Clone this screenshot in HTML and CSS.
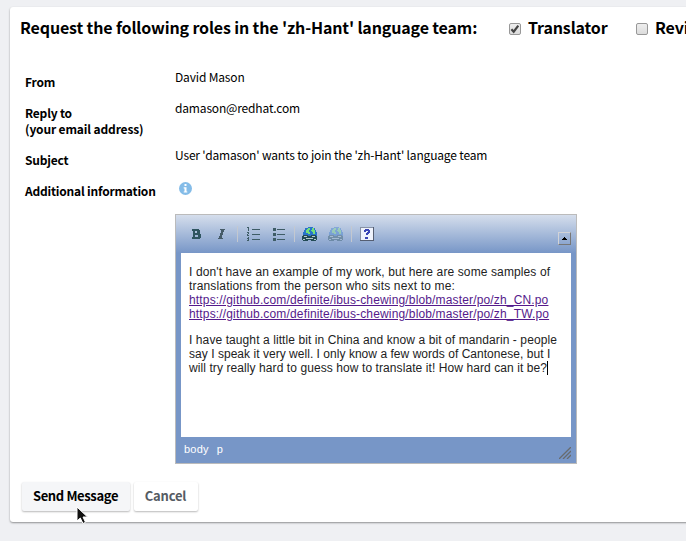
FILE: index.html
```
<!DOCTYPE html>
<html lang="en">
<head>
<meta charset="utf-8">
<title>Request to join language team</title>
<link rel="stylesheet" href="styles.css">
</head>
<body>
<main class="panel">
  <header class="roles">
    <h1 class="title">Request the following roles in the 'zh-Hant' language team:</h1>
    <span class="box"><svg width="12" height="12" viewBox="0 0 12 12"><path d="M2.4 6.2 4.7 8.7 9.3 2.7" fill="none" stroke="#444" stroke-width="2.2"/></svg></span>
    <span class="role first">Translator</span>
    <span class="box"></span>
    <span class="role">Revi</span>
  </header>
  <div class="row from"><div class="label">From</div><div class="value">David Mason</div></div>
  <div class="row reply"><div class="label">Reply to<br><span class="hint">(your email address)</span></div><div class="value mail">damason@redhat.com</div></div>
  <div class="row subject"><div class="label">Subject</div><div class="value">User 'damason' wants to join the 'zh-Hant' language team</div></div>
  <div class="row info"><div class="label">Additional information</div>
    <svg class="info-icon" width="13" height="13" viewBox="0 0 13 13"><circle cx="6.5" cy="6.5" r="6.5" fill="#84bce8"/><path d="M5.5 2h2v2h-2zM4.7 5.2h2.8v4.2h.8v1.2H4.7V9.400h.8V6.400h-.8z" fill="#fff"/></svg>
  </div>
  <section class="editor">
    <div class="toolbar">
      <svg width="350" height="24" viewBox="0 0 350 24" shape-rendering="crispEdges">
        <path d="M11 7h7v1h1v4h1v4h-1v1h-8v-2h1V9h-1zM14 9v2h2V9zM14 13v2h3v-2z" fill="#2f5560" fill-rule="evenodd"/>
        <g transform="translate(-1 0)">
        <path d="M40 7h5v1h-1v2h-1v3h-1v3h1v1h-5v-1h1v-2h1v-3h1V8h-1z" fill="#465b68"/>
        <path d="M57.500 4v16M114.500 4v16M171.500 4v16" stroke="#c3c8d0" fill="none"/>
        <g fill="#3e5c66"><path d="M72 7h8v1h-8zM72 12h8v1h-8zM72 17h8v1h-8zM97 7h8v1h-8zM97 12h8v1h-8zM97 17h8v1h-8zM93 6h3v3h-3zM93 11h3v3h-3zM93 16h3v3h-3z"/><path d="M67 5h2v4h-1V6h-1zM67 10h2v2h-1v1h1v1h-2v-2h1v-1h-1zM67 15h2v4h-2v-1h1v-1h-1v-1h1z"/></g>
        <g id="link" transform="translate(1 0)"><path d="M127 5h5v1h2v2h1v2h1v4h-14v-4h1V8h1V6h3z" fill="#2873ca"/><path d="M127 6h2v2h-1v2h1v2h-2v-1h-2V8h1V7h1zM131 6h2v2h1v4h-2v-2h-1V9h-1V8h1z" fill="#73df78"/><path d="M122 13h5v1h3v-1h5v1h1v4h-1v1h-5v-1h-3v1h-5v-1h-1v-4h1z" fill="#224a55"/><path d="M123 14h3v1h-3zM131 14h3v1h-3zM125 16h7v1h-7zM122 17h2v1h-2zM133 17h2v1h-2z" fill="#b4c9cc"/></g>
        <use href="#link" x="26" opacity=".35"/>
        <path d="M180 5h14v14h-14z" fill="#555e72"/><path d="M180 5h13v13h-13z" fill="#8791a5"/><path d="M181 6h12v12h-12z" fill="#eef2fc"/>
        <path d="M185 7h4v1h1v3h-1v1h-1v1h-2v-2h1v-1h1V9h-2v1h-2V8h1zM185 15h3v2h-3z" fill="#3945b5"/>
        </g>
      </svg>
      <span class="collapse"><svg width="5" height="3" viewBox="0 0 5 3" shape-rendering="crispEdges"><path d="M2 0h1v1h1v1h1v1H0V2h1V1h1z"/></svg></span>
    </div>
    <div class="content">
      <p><span class="l1">I don't have an example of my work, but here are some samples of</span><br><span class="l2">translations from the person who sits next to me:</span><br><a class="l3">https://github.com/definite/ibus-chewing/blob/master/po/zh_CN.po</a><br><a class="l3">https://github.com/definite/ibus-chewing/blob/master/po/zh_TW.po</a></p>
      <p><span class="l5">I have taught a little bit in China and know a bit of mandarin - people</span><br><span class="l6">say I speak it very well. I only know a few words of Cantonese, but I</span><br><span class="l7">will try really hard to guess how to translate it! How hard can it be?</span><i class="caret"></i></p>
    </div>
    <div class="status"><span>body</span><span>p</span>
      <svg class="grip" width="12" height="12" viewBox="0 0 12 12"><path d="M0 12 12 0M4 12l8-8M8 12l4-4" stroke="#686b6e" stroke-width="1.300"/></svg>
    </div>
  </section>
  <div class="actions"><span class="button send">Send Message</span><span class="button cancel">Cancel</span></div>
</main>
<svg class="pointer" width="14" height="20" viewBox="0 0 14 20"><path d="M1 1v14l3.300-3 2.700 5.500 2.500-1.200L7 11h4.500z" fill="#111" stroke="#fff"/></svg>
</body>
</html>
```
FILE: styles.css
```
* { box-sizing: border-box; }
body { margin: 0; height: 541px; overflow: hidden; background: #eff0f3; color: #000; font: 12px/16px "Noto Sans CJK SC", sans-serif; }
.panel { height: 515px; margin: 7px -10px 0 10px; background: #fff; border-radius: 3px; box-shadow: 0 1px 2px rgba(0,0,0,.4); overflow: hidden; }
.roles { display: flex; height: 59px; padding: 8px 0 0 10px; white-space: nowrap; font-size: 16px; line-height: 24px; font-weight: 700; letter-spacing: -.14px; }
.title { margin: 0; width: 489px; font: inherit; }
.box { width: 12px; height: 12px; margin: 8px 7px 0 0; border: 1px solid #989898; border-radius: 2px; background: linear-gradient(#eee, #dcdcdc); flex: none; }
.box svg { display: block; margin: -1px; }
.role.first { width: 108px; }
.row { display: flex; padding-left: 15px; white-space: nowrap; height: 31px; letter-spacing: -.17px; }
.row.reply { height: 47px; }
.row.info { height: 40px; }
.label { width: 150px; flex: none; font-weight: 700; padding-top: 8px; letter-spacing: -.2px; }
.hint { letter-spacing: -.14px; }
.value { padding-top: 3px; }
.info-icon { margin: 7px 0 0 4px; }
.editor { width: 402px; height: 250px; margin: -1px 0 0 165px; border: 1px solid #bbb; background: #7796c7; padding: 0 5px; font-family: "Liberation Sans", Arial, sans-serif; }
.toolbar { display: flex; justify-content: space-between; height: 38px; margin: 0 -5px; padding: 7px 5px 0; background: linear-gradient(#d5deec, #7796c7); }
.toolbar > svg { flex: none; }
.collapse { width: 13px; height: 13px; margin-top: 10px; border: 1px solid; border-color: #d2d3d7 #777 #777 #d2d3d7; display: flex; align-items: center; justify-content: center; }
.content { height: 184px; background: #fff; padding: 12px 8px; color: #222; font-size: 12px; line-height: 14px; white-space: nowrap; }
.content p { margin: 0 0 12px; }
.content a { color: #551a8b; text-decoration: underline; }
.l1 { letter-spacing: .115px; }
.l2 { letter-spacing: .16px; }
.l3 { letter-spacing: .155px; }
.l5 { letter-spacing: .09px; }
.l6 { letter-spacing: .035px; }
.l7 { letter-spacing: .085px; }
.caret { display: inline-block; width: 1px; height: 14px; background: #000; vertical-align: top; }
.status { display: flex; gap: 8px; height: 26px; padding: 4px 3px; color: #fff; font-size: 11px; line-height: 16px; letter-spacing: .2px; }
.grip { margin: 6px -3px 0 auto; }
.actions { display: flex; gap: 4px; padding: 18px 0 0 12px; }
.button { height: 29px; line-height: 28px; font-size: 13px; font-weight: 700; text-align: center; border-radius: 2px; box-shadow: 0 1px 2px rgba(0,0,0,.28); }
.send { width: 108px; padding-right: 1px; background: #f5f6f8; letter-spacing: -.37px; }
.cancel { width: 64px; padding-right: 1px; color: #555b63; letter-spacing: -.2px; }
.pointer { position: absolute; left: 76px; top: 506px; }
```
